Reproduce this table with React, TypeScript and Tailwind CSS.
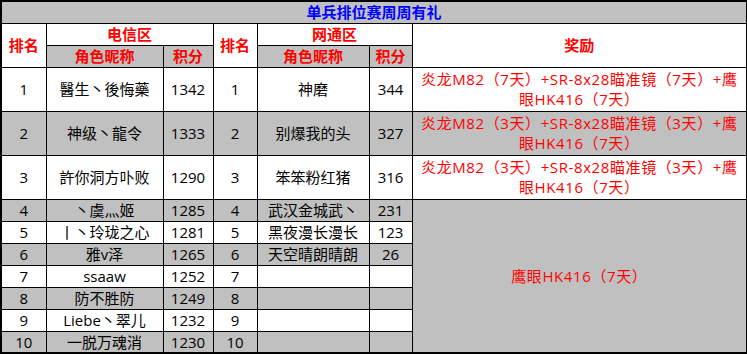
import React from 'react';

const tel: [number, string, number][] = [
  [1, '醫生丶後悔藥', 1342],
  [2, '神级丶龍令', 1333],
  [3, '許你洞方卟败', 1290],
  [4, '丶虞灬姬', 1285],
  [5, '丨丶玲珑之心', 1281],
  [6, '雅v泽', 1265],
  [7, 'ssaaw', 1252],
  [8, '防不胜防', 1249],
  [9, 'Liebe丶翠儿', 1232],
  [10, '一脱万魂消', 1230],
];

const net: [string, string][] = [
  ['神磨', '344'],
  ['别爆我的头', '327'],
  ['笨笨粉红猪', '316'],
  ['武汉金城武丶', '231'],
  ['黑夜漫长漫长', '123'],
  ['天空晴朗晴朗', '26'],
  ['', ''],
  ['', ''],
  ['', ''],
  ['', ''],
];

const rewards = [
  ['炎龙M82（7天）+SR-8x28瞄准镜（7天）+鹰', '眼HK416（7天）'],
  ['炎龙M82（3天）+SR-8x28瞄准镜（3天）+鹰', '眼HK416（7天）'],
  ['炎龙M82（3天）+SR-8x28瞄准镜（3天）+鹰', '眼HK416（7天）'],
];

const cell = 'border border-black text-center align-middle p-0';
const head = cell + ' font-bold text-[#ff0000]';
const reward = cell + ' text-[#ff0000] tracking-[0.6px] whitespace-nowrap';

export default function App() {
  return (
    <div
      className="w-[747px] h-[355px] bg-white text-[15px] leading-[20px] text-black"
      style={{ fontFamily: '"Open Sans", "Noto Sans CJK SC", sans-serif' }}
    >
      <table className="border-collapse table-fixed w-[746px] border-2 border-black">
        <colgroup>
          <col className="w-[45px]" />
          <col className="w-[117px]" />
          <col className="w-[50px]" />
          <col className="w-[44px]" />
          <col className="w-[112px]" />
          <col className="w-[43px]" />
          <col className="w-[335px]" />
        </colgroup>
        <tbody>
          <tr className="h-[22px] bg-[#c0c0c0]">
            <td colSpan={7} className={cell + ' font-bold text-[#0000ff]'}>
              单兵排位赛周周有礼
            </td>
          </tr>
          <tr className="h-[22px]">
            <td rowSpan={2} className={head}>排名</td>
            <td colSpan={2} className={head}>电信区</td>
            <td rowSpan={2} className={head}>排名</td>
            <td colSpan={2} className={head}>网通区</td>
            <td rowSpan={2} className={head}>奖励</td>
          </tr>
          <tr className="h-[22px] bg-[#c0c0c0]">
            <td className={head}>角色昵称</td>
            <td className={head}>积分</td>
            <td className={head}>角色昵称</td>
            <td className={head}>积分</td>
          </tr>
          {tel.map(([rank, name, score], i) => {
            const gray = i % 2 === 1;
            const tall = i < 3;
            return (
              <tr
                key={rank}
                className={(tall ? 'h-[44px] ' : 'h-[22px] ') + (gray ? 'bg-[#c0c0c0]' : 'bg-white')}
              >
                <td className={cell}>{rank}</td>
                <td className={cell + ' whitespace-nowrap'}>{name}</td>
                <td className={cell}>{score}</td>
                <td className={cell}>{rank}</td>
                <td className={cell + ' whitespace-nowrap'}>{net[i][0]}</td>
                <td className={cell}>{net[i][1]}</td>
                {tall && (
                  <td className={reward}>
                    {rewards[i][0]}
                    <br />
                    {rewards[i][1]}
                  </td>
                )}
                {i === 3 && (
                  <td rowSpan={7} className={reward + ' bg-[#c0c0c0]'}>
                    鹰眼HK416（7天）
                  </td>
                )}
              </tr>
            );
          })}
        </tbody>
      </table>
    </div>
  );
}
